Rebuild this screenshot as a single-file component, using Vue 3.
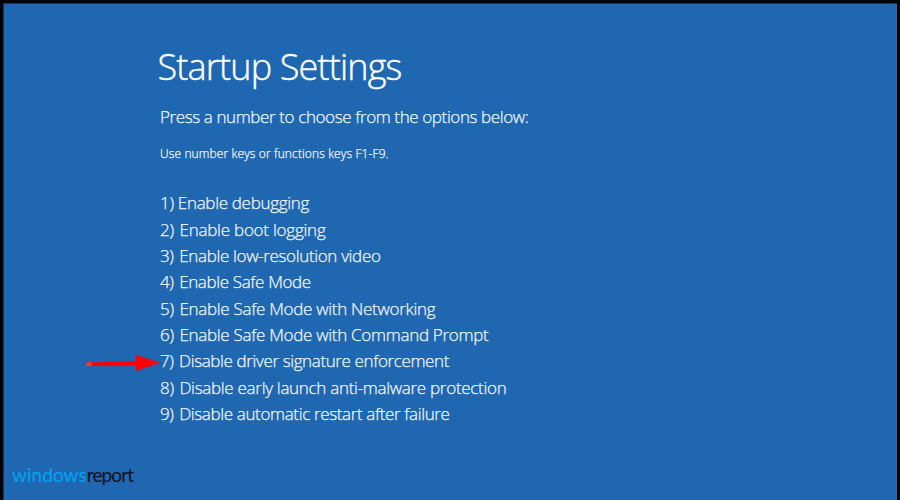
<template>
  <main class="screen">
    <h1 class="title">Startup Settings</h1>
    <p class="prompt">Press a number to choose from the options below:</p>
    <p class="hint">Use number keys or functions keys F1-F9.</p>

    <ul class="options">
      <li
        v-for="(option, index) in options"
        :key="option.label"
        class="option"
        :style="{ letterSpacing: option.spacing + 'px' }"
      >
        <span class="number">{{ index + 1 }})</span> {{ option.label }}
        <svg v-if="option.marked" class="arrow" width="76" height="18" viewBox="0 0 76 18">
          <path d="M1 8.6L51 7.1V1L75.5 8.7L51 17V11.7L1 11.9Z" fill="#ff0000" stroke="#8f2d55" stroke-width="0.5" />
          <path d="M1 8.6L6.5 8.4V11.9H1Z" fill="#f03a40" />
        </svg>
      </li>
    </ul>

    <div class="brand"><span class="brand-windows">windows</span><span class="brand-report">report</span></div>
  </main>
</template>

<script setup>
const options = [
  { label: 'Enable debugging', spacing: -0.31 },
  { label: 'Enable boot logging', spacing: -0.24 },
  { label: 'Enable low-resolution video', spacing: -0.34 },
  { label: 'Enable Safe Mode', spacing: -0.36 },
  { label: 'Enable Safe Mode with Networking', spacing: -0.29 },
  { label: 'Enable Safe Mode with Command Prompt', spacing: -0.29 },
  { label: 'Disable driver signature enforcement', spacing: -0.38, marked: true },
  { label: 'Disable early launch anti-malware protection', spacing: -0.29 },
  { label: 'Disable automatic restart after failure', spacing: -0.36 }
]
</script>

<style>
body {
  margin: 0;
  background: #000;
}
</style>

<style scoped>
.screen {
  box-sizing: border-box;
  display: flex;
  flex-direction: column;
  width: 900px;
  height: 500px;
  padding: 39px 0 0 156px;
  border: solid #000;
  border-width: 3px 3px 0 3px;
  background: #2067b2;
  box-shadow: inset 1px 1px 0 #12385f;
  color: #f2f7fc;
  font-family: "Open Sans", "Noto Sans", sans-serif;
  font-weight: 300;
  white-space: nowrap;
  overflow: hidden;
  -webkit-text-stroke: 0.25px currentColor;
}

.title {
  margin: 0 0 0 -1.5px;
  color: #fff;
  font-size: 36px;
  font-weight: 300;
  line-height: 50px;
  letter-spacing: -0.82px;
  -webkit-text-stroke-width: 0.4px;
}

.prompt {
  margin: 13px 0 0 1px;
  font-size: 17px;
  line-height: 24px;
  letter-spacing: -0.39px;
}

.hint {
  margin: 15px 0 0 1px;
  font-size: 12px;
  line-height: 20px;
  letter-spacing: 0.12px;
}

.options {
  margin: 26.4px 0 0 1px;
  padding: 0;
  list-style: none;
}

.option {
  position: relative;
  height: 26.35px;
  font-size: 17px;
  line-height: 26.35px;
}

.option:not(:first-child) .number {
  margin-right: 1.5px;
}

.arrow {
  position: absolute;
  top: 6px;
  left: -75px;
}

.brand {
  display: flex;
  margin: auto 0 13px -147px;
  font-family: Lato, sans-serif;
  font-size: 19px;
  font-weight: 400;
  line-height: 24px;
  -webkit-text-stroke-width: 0;
}

.brand-windows {
  color: #00a2f3;
  letter-spacing: 0.05px;
}

.brand-report {
  color: #06101d;
  letter-spacing: -0.88px;
}
</style>
